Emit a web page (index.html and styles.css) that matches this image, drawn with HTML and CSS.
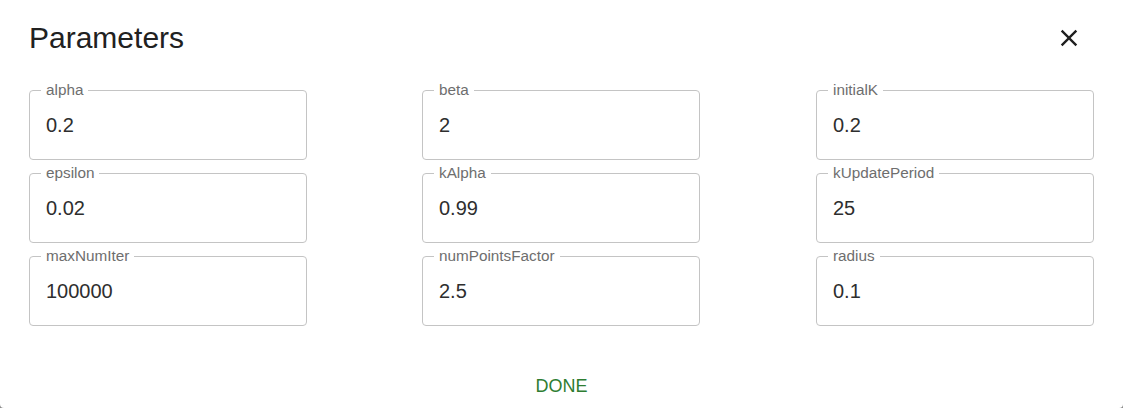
FILE: index.html
```html
<!DOCTYPE html>
<html lang="en">
<head>
<meta charset="utf-8">
<title>Parameters</title>
<link rel="stylesheet" href="styles.css">
</head>
<body>
<div class="dialog">
  <div class="header">
    <h2 class="title">Parameters</h2>
    <button class="close" aria-label="close">
      <svg viewBox="0 0 24 24" width="28" height="28"><path d="M19 6.41L17.59 5 12 10.59 6.41 5 5 6.41 10.59 12 5 17.59 6.41 19 12 13.41 17.59 19 19 17.59 13.41 12z"/></svg>
    </button>
  </div>
  <div class="grid">
    <div class="field"><span class="label">alpha</span><span class="value">0.2</span></div>
    <div class="field"><span class="label">beta</span><span class="value">2</span></div>
    <div class="field"><span class="label">initialK</span><span class="value">0.2</span></div>
    <div class="field"><span class="label">epsilon</span><span class="value">0.02</span></div>
    <div class="field"><span class="label">kAlpha</span><span class="value">0.99</span></div>
    <div class="field"><span class="label">kUpdatePeriod</span><span class="value">25</span></div>
    <div class="field"><span class="label">maxNumIter</span><span class="value">100000</span></div>
    <div class="field"><span class="label">numPointsFactor</span><span class="value">2.5</span></div>
    <div class="field"><span class="label">radius</span><span class="value">0.1</span></div>
  </div>
  <div class="actions">
    <button class="done">DONE</button>
  </div>
</div>
</body>
</html>
```
FILE: styles.css
```css
html, body {
  margin: 0;
  padding: 0;
  background: #8a8a8a;
}
body {
  font-family: "Liberation Sans", Arial, sans-serif;
  width: 1123px;
  height: 408px;
  overflow: hidden;
}
.dialog {
  background: #fff;
  width: 1123px;
  height: 408px;
  border-radius: 0 0 4px 4px;
  box-sizing: border-box;
}
.header {
  display: flex;
  justify-content: space-between;
  align-items: center;
  padding: 22px 40px 0 29px;
  height: 32px;
}
.title {
  margin: 0;
  font-size: 30px;
  font-weight: 400;
  line-height: 32px;
  color: #212121;
}
.close {
  border: 0;
  background: none;
  padding: 0;
  width: 28px;
  height: 28px;
  display: flex;
  cursor: pointer;
}
.close svg {
  fill: #1f1f1f;
}
.grid {
  display: grid;
  grid-template-columns: 393px 394px 278px;
  row-gap: 13px;
  padding: 0 29px;
  margin-top: 36px;
}
.field {
  position: relative;
  width: 278px;
  height: 70px;
  box-sizing: border-box;
  border: 1px solid #c4c4c4;
  border-radius: 4px;
  display: flex;
  align-items: center;
  padding: 0 16px;
}
.label {
  position: absolute;
  top: -10px;
  left: 11px;
  padding: 0 5px;
  background: #fff;
  font-size: 15.3px;
  line-height: 18px;
  color: #6e6e6e;
}
.value {
  font-size: 20px;
  line-height: 24px;
  color: #2e2e2e;
}
.actions {
  display: flex;
  justify-content: center;
  margin-top: 48px;
}
.done {
  border: 0;
  background: none;
  font-family: "Liberation Sans", Arial, sans-serif;
  font-size: 18px;
  font-weight: 400;
  line-height: 24px;
  color: #2e7d32;
  padding: 0 8px;
}
```
